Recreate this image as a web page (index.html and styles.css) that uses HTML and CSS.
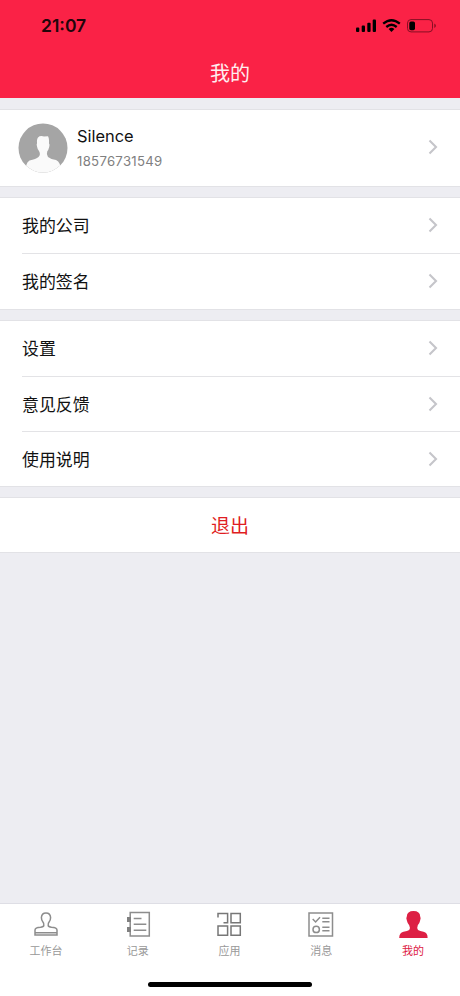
FILE: index.html
```html
<!DOCTYPE html>
<html lang="zh-CN">
<head>
<meta charset="utf-8">
<title>我的</title>
<link rel="stylesheet" href="styles.css">
</head>
<body>
<div class="app">
  <header class="header">
    <div class="status">
      <span class="time">21:07</span>
      <svg class="indicators" width="82" height="16" viewBox="0 0 82 16">
        <rect x="1" y="9.5" width="3.3" height="4.5" rx="1"/><rect x="6.700" y="7.500" width="3.300" height="6.500" rx="1"/><rect x="12.300" y="4.700" width="3.300" height="9.300" rx="1"/><rect x="17.700" y="1.500" width="3.300" height="12.500" rx="1"/>
        <g fill="none" stroke="#000" stroke-width="2.300"><path d="M28.200 5.700Q36.500 -1.300 44.800 5.700"/><path d="M31.300 9Q36.500 4.600 41.700 9"/></g>
        <path d="M33.600 10.900Q36.500 8.700 39.400 10.900L36.500 13.900Z"/>
        <rect x="52.500" y="1.600" width="25" height="12.300" rx="3.500" fill="none" stroke="#850f23"/>
        <rect x="54.300" y="3.400" width="5.700" height="8.800" rx="1.700"/>
        <path d="M79.300 5.500Q82.500 7.700 79.300 10Z" fill="#850f23"/>
      </svg>
    </div>
    <h1 class="title">我的</h1>
  </header>
  <main class="content">
    <section class="group profile">
      <svg class="avatar" width="50" height="50" viewBox="0 0 50 50">
        <defs><clipPath id="face"><circle cx="25" cy="25" r="24.500"/></clipPath></defs>
        <g clip-path="url(#face)"><rect width="50" height="50" fill="#a5a5a5"/>
        <path fill="#fafafa" d="M20 14.500Q22 12.400 26 13.500L30 13.200Q31.300 15 31 20.500Q32 21 31.200 24Q30.500 27 29.300 28.300Q28 31.500 30 34Q33 36.500 38 37Q43 38.500 43 50H8Q7 40 11.500 37.500Q18 36 20.500 34Q23 31.500 21 28Q19.500 26.500 19 23.500Q18.300 21 19 20.500Q18.700 16 20 14.500Z"/></g>
      </svg>
      <div class="person"><div class="name">Silence</div><div class="phone">18576731549</div></div>
      <svg class="chevron" width="10" height="16" viewBox="0 0 10 16"><path d="M1.500 1.500L8 8L1.500 14.500"/></svg>
    </section>
    <section class="group">
      <div class="row"><span>我的公司</span><svg class="chevron" width="10" height="16" viewBox="0 0 10 16"><path d="M1.500 1.500L8 8L1.500 14.500"/></svg></div>
      <div class="row"><span>我的签名</span><svg class="chevron" width="10" height="16" viewBox="0 0 10 16"><path d="M1.500 1.500L8 8L1.500 14.500"/></svg></div>
    </section>
    <section class="group">
      <div class="row"><span>设置</span><svg class="chevron" width="10" height="16" viewBox="0 0 10 16"><path d="M1.500 1.500L8 8L1.500 14.500"/></svg></div>
      <div class="row"><span>意见反馈</span><svg class="chevron" width="10" height="16" viewBox="0 0 10 16"><path d="M1.500 1.500L8 8L1.500 14.500"/></svg></div>
      <div class="row"><span>使用说明</span><svg class="chevron" width="10" height="16" viewBox="0 0 10 16"><path d="M1.500 1.500L8 8L1.500 14.500"/></svg></div>
    </section>
    <section class="group logout">退出</section>
  </main>
  <footer class="footer">
    <nav class="tabs">
      <div class="tab"><svg class="icon" width="30" height="30" viewBox="0 0 30 30">
        <path d="M12.800 16.500Q13.200 14.500 11.800 12.800Q10.400 11 10.400 8.500Q10.700 4 15 4Q19.300 4 19.600 8.500Q19.600 11 18.200 12.800Q16.800 14.500 17.200 16.500Q17.500 18 20.500 18.300Q25.800 18.500 26 21V26H4V21Q4.200 18.500 9.500 18.300Q12.500 18 12.800 16.500ZM4 23.800H26"/></svg><span>工作台</span></div>
      <div class="tab"><svg class="icon" width="30" height="30" viewBox="0 0 30 30">
        <path d="M7.200 3.500H26.300V27H7.200ZM10.700 9.500H18.500M10.700 15.300H23.300M10.700 21.300H23.300"/><path class="solid" d="M4 8h4v5H4zM4 18h4v5H4z"/></svg><span>记录</span></div>
      <div class="tab"><svg class="icon grid" width="30" height="30" viewBox="0 0 30 30">
        <path d="M4 8.500V4.500H13.600V13.800H9.500M17 4.500H26.300V13.800H17ZM4 17H13.600V26.300H4ZM17 17H26.300V26.300H17Z"/></svg><span>应用</span></div>
      <div class="tab"><svg class="icon" width="30" height="30" viewBox="0 0 30 30">
        <path d="M3 4H26.500V27H3ZM6.700 10L9.600 13L14 8.300M16.300 9.200H23.500M16.300 12.800H23.500M16.300 18.200H23.500M16.300 21.800H23.500"/><circle cx="10.200" cy="20.400" r="3.200"/></svg><span>消息</span></div>
      <div class="tab active"><svg width="30" height="30" viewBox="0 0 30 30">
        <path fill="#dd2044" d="M15.500 2Q22 2 22.200 7.500Q23.200 8.500 22 12Q21.500 14.500 19.800 16.300Q18.500 19.500 20 21Q22 22.300 25.500 22.800Q29.700 23.500 29.600 29H1.200Q1.300 23.700 5.500 22.800Q9.500 22.200 11.200 21Q12.700 19.300 11.200 16.300Q9.500 14.500 9 12Q7.700 8.500 8.800 7.500Q9 2 15.500 2Z"/></svg><span>我的</span></div>
    </nav>
    <div class="home-indicator"></div>
  </footer>
</div>
</body>
</html>
```
FILE: styles.css
```css
* { box-sizing: border-box; }
body { margin: 0; font-family: Inter, "Noto Sans CJK SC", sans-serif; color: #111; background: #ededf2; }
.app { height: 996px; display: flex; flex-direction: column; }
.header { height: 98px; background: #fa2246; flex: none; }
.status { height: 49px; padding: 1px 23px 0 41px; display: flex; align-items: center; justify-content: space-between; }
.time { font-size: 17.5px; font-weight: 600; color: #20050a; }
.indicators { display: block; margin-top: 1px; }
.title { margin: 0; height: 49px; line-height: 50px; text-align: center; color: #ffeef0; font-size: 20px; font-weight: 400; }
.content { flex: 1; padding-top: 12px; display: flex; flex-direction: column; gap: 12px; }
.group { background: #fff; box-shadow: 0 -1px #e2e2e6, 0 1px #e2e2e6; }
.profile { height: 76px; padding: 0 22px 0 18px; display: flex; align-items: center; }
.avatar { margin-top: -1px; }
.person { margin-left: 9px; flex: 1; }
.name { font-size: 16.4px; line-height: 24px; margin-top: -3px; }
.phone { font-size: 13.2px; letter-spacing: .28px; line-height: 18px; color: #808080; margin-top: 4px; }
.chevron { display: block; flex: none; fill: none; stroke: #c5c5ca; stroke-width: 2.1; margin-top: -1px; }
.profile .chevron { margin-top: -2px; }
.row { height: 55.4px; margin-left: 22px; padding-right: 22px; display: flex; align-items: center; justify-content: space-between; font-size: 16.9px; }
.row span { margin-top: -2px; }
.row + .row { height: 55.2px; border-top: 1px solid #e3e3e6; }
.logout { height: 54px; line-height: 58px; text-align: center; color: #e01d22; font-size: 19px; }
.footer { height: 93px; background: #fff; border-top: 1px solid #dedee5; flex: none; }
.tabs { display: grid; grid-template-columns: repeat(5, 1fr); height: 78px; padding-top: 5px; margin-right: 1px; }
.tab { display: flex; flex-direction: column; align-items: center; color: #999; font-size: 11px; line-height: 16px; }
.tab span { margin-top: 4px; }
.tab.active { color: #dd2044; }
.icon { fill: none; stroke: #8d8d8d; stroke-width: 1.5; }
.grid { stroke: #777; }
.solid { fill: #808080; stroke: none; }
.home-indicator { width: 164px; height: 5px; border-radius: 3px; background: #000; margin: 0 auto; }
```
